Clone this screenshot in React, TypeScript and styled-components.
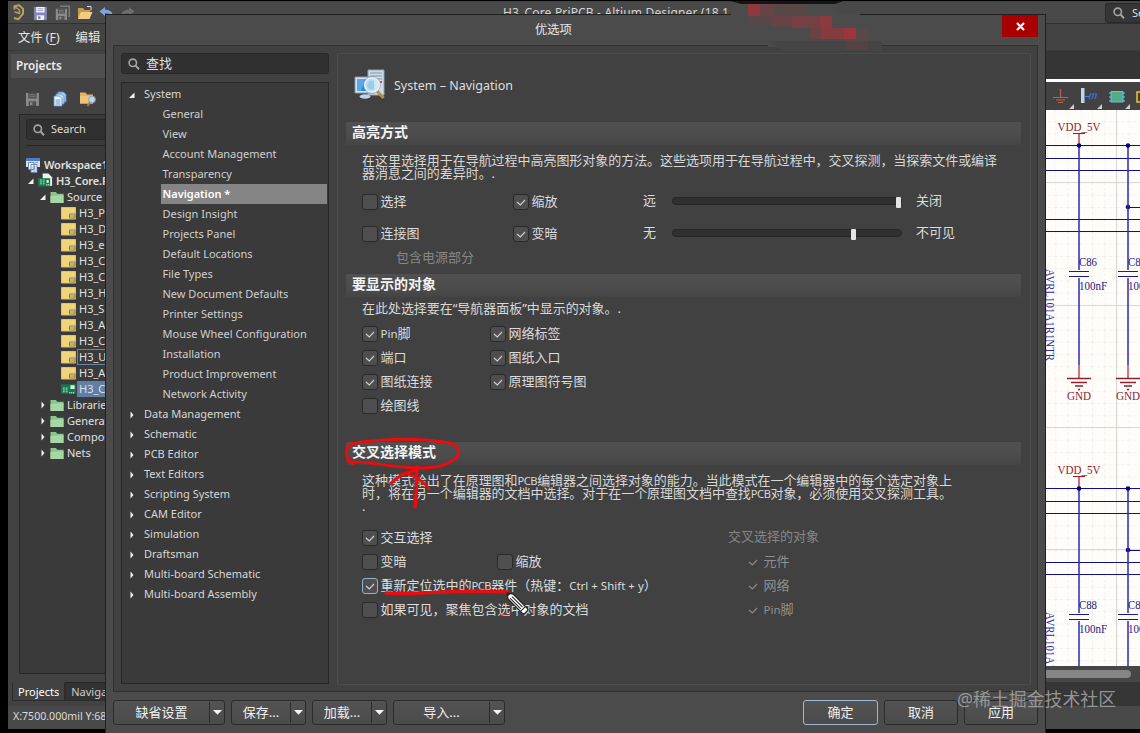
import React from 'react';
import styled, { createGlobalStyle, css } from 'styled-components';

const Global = createGlobalStyle`
  * { box-sizing: border-box; }
  body { margin: 0; background: #000; overflow: hidden; }
  body, button { font-family: "Noto Sans", "Noto Sans CJK SC", sans-serif; }
`;

const Desktop = styled.div`
  position: relative;
  width: 1140px;
  height: 733px;
  overflow: hidden;
  background: #000;
  color: #dcdcdc;
  font-size: 12px;
`;

/* ---------- main application window ---------- */

const AppWindow = styled.div`
  display: flex;
  flex-direction: column;
  width: 1132px;
  height: 728px;
  margin: 1px 0 0 8px;
  padding-top: 1px;
  background: #424242;
`;

const TitleBar = styled.header`
  display: flex;
  align-items: center;
  height: 22px;
  flex: none;
  background: #494949;
  border-bottom: 1px solid #303030;
`;

const QuickIcons = styled.div`
  display: flex;
  align-items: center;
  gap: 6px;
  padding-left: 2px;
  width: 495px;
  flex: none;
  svg { display: block; }
`;

const WindowTitle = styled.div`
  width: 602px;
  font-size: 12px;
  white-space: nowrap;
  line-height: 22px;
  letter-spacing: 0.16px;
  color: #d4d4d4;
`;

const GlobalSearch = styled.div`
  display: flex;
  align-items: center;
  gap: 7px;
  flex: 1;
  height: 20px;
  padding-left: 7px;
  background: #363636;
  border: 1px solid #2a2a2a;
  border-right: 0;
  border-radius: 3px 0 0 3px;
  overflow: hidden;
  font-size: 11px;
  svg { flex: none; }
`;

const MenuBar = styled.nav`
  display: flex;
  align-items: center;
  gap: 16px;
  height: 27px;
  flex: none;
  padding-left: 10px;
  font-size: 12.3px;
  color: #e4e4e4;
  background: #434343;
  border-bottom: 1px solid #3a3a3a;
  u { text-underline-offset: 2px; }
`;

const Workspace = styled.div`
  display: flex;
  justify-content: space-between;
  flex: 1;
  min-height: 0;
`;

const ProjectPanel = styled.aside`
  display: flex;
  flex-direction: column;
  width: 150px;
  padding: 3px 0 0 3px;
`;

const PanelTitle = styled.h2`
  margin: 0;
  height: 24px;
  padding-left: 5px;
  line-height: 22px;
  font-size: 11.7px;
  font-weight: 600;
  background: #4f4f4f;
  color: #ececec;
`;

const PanelTools = styled.div`
  display: flex;
  align-items: center;
  gap: 11px;
  height: 36px;
  padding: 5px 0 0 14px;
  svg { display: block; }
`;

const TreeBox = styled.div`
  height: 560px;
  margin-left: 8px;
  border: 1px solid #262626;
  background: #3a3a3a;
`;

const SearchField = styled.div<{ $large?: boolean }>`
  display: flex;
  align-items: center;
  height: 21px;
  border: 1px solid #282828;
  border-radius: 3px;
  background: #303030;
  color: #dedede;
  ${p => p.$large
    ? css`padding: 0 0 2px 6px; gap: 6px; font-size: 13px; flex: none; line-height: 16px; svg { margin-top: 2px; }`
    : css`margin: 4px 0 0 6px; padding: 0 0 2px 6px; gap: 6px; font-size: 11px; svg { margin-top: 2px; }`}
`;

const Rule = styled.div`
  height: 1px;
  margin: 5px 0 11px 6px;
  background: #262626;
`;

const ProjectRow = styled.div<{ $indent: number; $bold?: boolean }>`
  display: flex;
  align-items: center;
  height: 16px;
  padding-left: ${p => p.$indent}px;
  font-size: 11px;
  white-space: nowrap;
  color: #e0e0e0;
  font-weight: ${p => (p.$bold ? 600 : 400)};
  letter-spacing: ${p => (p.$bold ? '-0.15px' : '0')};
  svg { flex: none; margin-right: 1px; }
  svg + svg { margin-left: 2px; }
`;

const ProjectName = styled.span<{ $mark?: 'outline' | 'fill' }>`
  padding: 0 1px;
  height: 16px;
  line-height: 13px;
  flex: 1;
  border: 1px solid ${p => (p.$mark === 'outline' ? '#6883a5' : 'transparent')};
  background: ${p => (p.$mark === 'fill' ? '#5d7fa8' : 'transparent')};
`;

const BottomTabs = styled.div`
  display: flex;
  height: 19px;
  margin: 8px 0 0 1px;
  font-size: 11px;
`;

const BottomTab = styled.div<{ $active?: boolean }>`
  padding: 0 5px;
  line-height: 17px;
  background: ${p => (p.$active ? '#424242' : '#333')};
  border: 1px solid #2c2c2c;
  border-top-color: ${p => (p.$active ? '#424242' : '#262626')};
  color: ${p => (p.$active ? '#fff' : '#ccc')};
`;

const StatusBar = styled.footer`
  height: 23px;
  flex: none;
  padding-left: 5px;
  line-height: 21px;
  font-size: 10.6px;
  background: #494949;
`;

const DocumentArea = styled.main`
  display: flex;
  flex-direction: column;
  width: 94px;
`;

const DocTabs = styled.div`
  height: 31px;
  flex: none;
  background: #353535;
  border-bottom: 3px solid #fff;
`;

const DocTools = styled.div`
  height: 28px;
  flex: none;
  svg { display: block; }
`;

const Sheet = styled.div`
  height: 556px;
  flex: none;
  background: #fffdfa;
  svg { display: block; }
`;

const ScrollTrack = styled.div`
  height: 16px;
  flex: none;
  padding-top: 4px;
  background: #464646;
`;

const ScrollThumb = styled.div`
  width: 85px;
  height: 8px;
  border-radius: 0 4px 4px 0;
  background: #858585;
`;

const DocFooter = styled.div`
  flex: 1;
  background: #363636;
`;

/* ---------- preferences dialog ---------- */

const Dialog = styled.section`
  position: absolute;
  left: 105px;
  top: 14px;
  width: 941px;
  height: 730px;
  display: flex;
  flex-direction: column;
  background: #4b4b4b;
  border: 1px solid #202020;
  padding: 0 7px;
`;

const DialogTitle = styled.div`
  display: flex;
  justify-content: flex-end;
  height: 30px;
  flex: none;
`;

const TitleText = styled.div`
  flex: 1;
  padding-left: 422px;
  line-height: 29px;
  font-size: 12.3px;
  color: #e6e6e6;
`;

const CloseButton = styled.button`
  display: flex;
  align-items: center;
  justify-content: center;
  width: 36px;
  height: 22px;
  padding: 0;
  border: 0;
  background: #a80000;
`;

const DialogBody = styled.div`
  display: flex;
  gap: 8px;
  height: 647px;
  flex: none;
  padding: 7px 6px 6px 7px;
  border: 1px solid #303030;
  background: #414141;
`;

const Sidebar = styled.div`
  display: flex;
  flex-direction: column;
  gap: 8px;
  width: 208px;
`;

const Categories = styled.div`
  height: 602px;
  padding: 1px;
  border: 1px solid #272727;
  background: #3a3a3a;
`;

const Category = styled.div`
  display: flex;
  align-items: center;
  height: 20px;
  padding: 0 0 2px 5px;
  font-size: 11px;
  color: #d6d6d6;
  svg { margin: 3px 8px 0 0; }
`;

const Page = styled.div<{ $active?: boolean }>`
  height: 20px;
  margin-left: 38px;
  padding-left: 1.500px;
  line-height: 19px;
  font-size: 11px;
  white-space: nowrap;
  color: ${p => (p.$active ? '#fff' : '#cfcfcf')};
  font-weight: ${p => (p.$active ? 600 : 400)};
  background: ${p => (p.$active ? '#858585' : 'transparent')};
`;

const Content = styled.div`
  width: 694px;
  height: 632px;
  padding: 0 9px 0 8px;
  border: 1px solid #4d4d4d;
`;

const PageHeader = styled.div`
  display: flex;
  align-items: center;
  gap: 8px;
  height: 68px;
  padding: 0 0 6px 8px;
  font-size: 12.500px;
  color: #dedede;
`;

const SectionBar = styled.h3`
  height: 23px;
  margin: 0;
  padding-left: 6px;
  line-height: 20px;
  font-size: 14px;
  font-weight: 700;
  color: #f4f4f4;
  background: linear-gradient(#505050, #4b4b4b 70%, #444);
`;

const SectionBody = styled.div<{ $height: number }>`
  height: ${p => p.$height}px;
  padding-left: 16px;
  font-size: 13px;
`;

const Description = styled.p<{ $top: number; $height: number }>`
  margin: 0;
  padding-top: ${p => p.$top}px;
  height: ${p => p.$height}px;
  line-height: 13px;
  white-space: nowrap;
  letter-spacing: -0.04px;
  color: #d8d8d8;
`;

const Abbr = styled.span`
  font-size: 11.2px;
  letter-spacing: -0.5px;
`;

const OptionRow = styled.div<{ $height?: number; $columns: string }>`
  display: grid;
  grid-template-columns: ${p => p.$columns};
  align-items: center;
  height: ${p => p.$height ?? 24}px;
`;

const OptionLabel = styled.label<{ $dim?: boolean }>`
  display: flex;
  align-items: center;
  gap: 2.500px;
  white-space: nowrap;
  line-height: 16px;
  color: ${p => (p.$dim ? '#8f8f8f' : '#dcdcdc')};
  small { font-size: 11.5px; }
`;

const OptionText = styled.span`
  padding-bottom: 2px;
`;

const Box = styled.span<{ $focus?: boolean; $bare?: boolean }>`
  display: flex;
  align-items: center;
  justify-content: center;
  width: 16px;
  height: 16px;
  border: 1px solid ${p => (p.$bare ? 'transparent' : p.$focus ? '#8fb2cf' : '#2a2a2a')};
  border-radius: 3px;
  background: ${p => (p.$bare ? 'transparent' : '#4f4f4f')};
`;

const Caption = styled.span<{ $dim?: boolean; $indent?: number }>`
  display: block;
  margin-left: ${p => p.$indent ?? 0}px;
  padding-bottom: 3px;
  line-height: 15px;
  color: ${p => (p.$dim ? '#868686' : '#dcdcdc')};
`;

const Track = styled.span`
  display: block;
  width: 230px;
  height: 8px;
  margin-bottom: 2px;
  border: 1px solid #272727;
  border-radius: 4px;
  background: #303030;
`;

const Thumb = styled.span<{ $at: number }>`
  display: block;
  width: 5px;
  height: 11px;
  margin: -1px 0 0 ${p => p.$at}px;
  border-radius: 1px;
  background: #e4e4e4;
`;

const DialogButtons = styled.div`
  display: flex;
  gap: 6px;
  padding-top: 8px;
`;

const Spacer = styled.div`
  flex: 1;
`;

const Button = styled.button<{ $width: number; $primary?: boolean }>`
  display: flex;
  align-items: center;
  width: ${p => p.$width}px;
  height: 25px;
  padding: 0;
  border: 1px solid ${p => (p.$primary ? '#9db9d8' : '#2b2b2b')};
  border-radius: 3px;
  background: linear-gradient(#535353, #4b4b4b);
  color: #efefef;
  font-size: 13px;
`;

const ButtonText = styled.span`
  flex: 1;
  text-align: center;
  line-height: 18px;
  padding-bottom: 2px;
`;

const DropPart = styled.span`
  display: flex;
  align-items: center;
  justify-content: center;
  width: 15px;
  height: 21px;
  border-left: 1px solid #2b2b2b;
`;

const Overlay = styled.svg`
  position: absolute;
  left: 0;
  top: 0;
  pointer-events: none;
`;

/* ---------- icons ---------- */

const SearchIcon = ({ size = 12 }: { size?: number }) => (
  <svg width={size} height={size} viewBox="0 0 12 12" fill="none" stroke="#a5a5a5">
    <circle cx="4.8" cy="4.8" r="3.7" strokeWidth="1.6" />
    <path d="M7.6 7.6 11 11.2" strokeWidth="2" />
  </svg>
);

const LogoIcon = () => (
  <svg width="17" height="17" viewBox="0 0 17 17" fill="none" stroke="#b6a25c" strokeWidth="2" strokeLinejoin="round">
    <path d="M4.500 5.500V2.200L9 1.300l4 3.400v5L8.500 15.200 4 14" />
    <path d="M4.500 2.500 9.500 6v3.500L4.500 7.800" strokeWidth="1.500" />
  </svg>
);

const DiskIcon = ({ body, slot, stack }: { body: string; slot: string; stack?: boolean }) => (
  <svg width="16" height="16" viewBox="0 0 16 16">
    {stack && <path d="M5 .5h10v11.500h-1.500V2H5z" fill={body} opacity=".8" />}
    <g transform={stack ? 'translate(0 3) scale(.8)' : 'translate(0 1) scale(.93)'}>
      <path d="M1 1h14v14H1z" fill={body} />
      <path d="M3.500 1h9v6h-9z" fill={slot} />
      <path d="M5 3h6M5 5h6" stroke={body} strokeWidth=".8" />
      <path d="M4 10h8v5H4z" fill={slot} />
      <path d="M5.500 11h2.500v3H5.500z" fill={body} />
    </g>
  </svg>
);

const OpenFolder = () => (
  <svg width="16" height="16" viewBox="0 0 16 16">
    <path d="M1 14V3h5l1.500 2H13v3" fill="#c99c4a" />
    <path d="M10 1.500h4v4" fill="none" stroke="#ddd" />
    <path d="M1 14 4 7h11.500l-3 7z" fill="#f0cd84" />
  </svg>
);

const CurveArrow = ({ color, flip }: { color: string; flip?: boolean }) => (
  <svg width="15" height="14" viewBox="0 0 15 14">
    <g transform={flip ? 'translate(15 0) scale(-1 1)' : undefined}>
      <path d="M.5 5.500 6 1v2.800c5 0 7.500 2 8 6.700C12 8 10 7.300 6 7.300V10z" fill={color} />
    </g>
  </svg>
);

const PagesIcon = () => (
  <svg width="16" height="16" viewBox="0 0 16 16" stroke="#5a8cc4" strokeWidth=".9">
    <path d="M6 1h5.500L14 3.500V11H6z" fill="#a8cdf0" />
    <path d="M4 3h5.500L12 5.500V13H4z" fill="#c9e1f7" />
    <path d="M2 5h5.500L10 7.500V15H2z" fill="#eef6fd" />
    <path d="M3.500 9h5M3.500 11h5M3.500 13h5" />
  </svg>
);

const FolderSearch = () => (
  <svg width="18" height="16" viewBox="0 0 18 16">
    <path d="M1 1.500h5.500L8 3.500h6v9H1z" fill="#e3b35d" />
    <path d="M1 5h13v7.500H1z" fill="#edc47a" />
    <path d="m11.500 10.500-3 4.500" stroke="#b87a2e" strokeWidth="2" />
    <circle cx="13" cy="8.500" r="3.400" fill="#b9d6ea" stroke="#8796a4" strokeWidth=".9" />
  </svg>
);

const WorkspaceIcon = () => (
  <svg width="16" height="16" viewBox="0 0 16 16">
    <path d="M1 1h14v3H1z" fill="#4f7cc4" />
    <path d="M1 4h14v6H1z" fill="#d5e2f2" />
    <path d="M3.500 5.500H9v7H3.500zM6 7.500h6v8H6z" fill="#f6f9fd" stroke="#5d7fae" strokeWidth=".9" />
    <path d="M7.500 10h3M7.500 12h3M7.500 14h3M10 6l3-1" stroke="#5d7fae" strokeWidth=".8" />
  </svg>
);

const BoardIcon = ({ sheet }: { sheet?: boolean }) => (
  <svg width="15" height="16" viewBox="0 0 16 16">
    {sheet && <path d="M5 0h6l4 4v9H5z" fill="#eef3f0" />}
    <path d={sheet ? 'M0 5h13v9H0z' : 'M0 3h16v10H0z'} fill="#14794f" />
    <path d="M2 7h2M2 9h2M2 11h2M5 7h2M5 9h2M5 11h2" stroke="#b8e4cc" strokeWidth="1" />
    <path d={sheet ? 'M9 7h2.500v3H9z' : 'M10 4h4.500v4H10z'} fill="#d9f1e4" />
    <path d="M9 12h5" stroke="#d9f1e4" strokeDasharray="1 1" strokeWidth="1.600" />
  </svg>
);

const GreenFolder = () => (
  <svg width="14" height="13" viewBox="0 0 14 13">
    <path d="M.5 1h5.500l1.200 1.800h6.300V12H.5z" fill="#8cc48a" />
    <path d="M.5 5 13.500 4v8H.5z" fill="#a6d8a2" />
  </svg>
);

const SchDocIcon = () => (
  <svg width="15" height="13" viewBox="0 0 15 13">
    <path d="M.5.500h14v11.500H.5z" fill="#efd47b" stroke="#e6c05c" />
    <path d="M8.500 7h5.500v4H8.500zM8.500 9H14" fill="#f3df9b" stroke="#86703a" strokeWidth=".9" />
  </svg>
);

const Caret = ({ open }: { open?: boolean }) => (
  <svg width="8" height="8" viewBox="0 0 8 8" fill="#f2f2f2">
    {open ? <path d="M6.500 1.500v5.500H1z" /> : <path d="M2.500.500v7l3-3.500z" />}
  </svg>
);

const DropCaret = () => (
  <svg width="9" height="5" viewBox="0 0 9 5"><path d="M0 0h9L4.500 4.800z" fill="#f4f4f4" /></svg>
);

const Check = ({ dim }: { dim?: boolean }) => (
  <svg width="10" height="9" viewBox="0 0 10 9" fill="none" stroke={dim ? '#8c8c8c' : '#cfcfcf'} strokeWidth="1.150">
    <path d="m1 4 3.300 3L9 2" />
  </svg>
);

const ComputerIcon = () => (
  <svg width="32" height="32" viewBox="0 0 32 32">
    <path d="M14 1h16v25H14z" fill="#cfdbe4" stroke="#8ea6b8" />
    <path d="M16 4h12M16 7h12M16 10h12" stroke="#7e97aa" />
    <path d="M26 13h2" stroke="#d05545" strokeWidth="2" />
    <path d="M1 8h19v16H1z" fill="#d7e4ed" stroke="#7e9bb1" />
    <path d="M3 10h15v12H3z" fill="#2b86d4" />
    <path d="M3 10h8L7 22H3z" fill="#56a8e8" />
    <ellipse cx="11" cy="27.500" rx="5.500" ry="2.200" fill="#c6d4de" />
    <path d="m23 22 6.500 7" stroke="#b98d4d" strokeWidth="3" />
    <circle cx="18" cy="16" r="7.500" fill="#cfeafa" fillOpacity=".88" stroke="#eef4f8" strokeWidth="1.600" />
    <circle cx="18" cy="16" r="8.400" fill="none" stroke="#8398a8" strokeWidth=".6" />
    <path d="M13 16c1-4 4-5 7-4.500v9c-4 1-6-1-7-4.500z" fill="#8fc7ee" opacity=".8" />
  </svg>
);

/* ---------- schematic drawing ---------- */

const Capacitor = ({ x, name }: { x: number; name: string }) => (
  <g>
    <path d={`M${x} 145V270M${x} 278V365`} stroke="#2f2bb0" strokeWidth="1.500" />
    <path d={`M${x - 10} 271.500h20M${x - 10} 276.500h20`} stroke="#1a1a90" strokeWidth="1.200" />
    <path d={`M${x} 365V378`} stroke="#c02a35" strokeWidth="1.300" />
    <path d={`M${x - 12} 378.500h24M${x - 8} 382.500h16M${x - 4} 386h8M${x - 1} 389.500h2`} stroke="#8a2030" strokeWidth="1.300" />
    <circle cx={x} cy="145.500" r="2.300" fill="#000080" />
    <g fill="#1b1a80">
      <text x={x} y="265.500" textLength={18} lengthAdjust="spacingAndGlyphs">{name}</text>
      <text x={x} y="290" textLength="28" lengthAdjust="spacingAndGlyphs">100nF</text>
    </g>
    <text x={x} y="400" textAnchor="middle" textLength="24" lengthAdjust="spacingAndGlyphs" fill="#8a1c2c">GND</text>
  </g>
);

const Circuit = ({ dy, cap, part }: { dy: number; cap: string; part: string }) => (
  <g transform={`translate(0 ${dy})`}>
    <path d="M1046 145.500h94M1046 158.500h94M1046 170.500h94M1046 219.500h94M1046 231.500h94M1128 207.500h12" stroke="#101080" strokeWidth="1.200" />
    <path d="M1073 133.500h12M1079 133v12" stroke="#a01825" strokeWidth="1.200" />
    <circle cx="1128" cy="207" r="2.300" fill="#000080" />
    <text x="1057.500" y="131" textLength="43" lengthAdjust="spacingAndGlyphs" fill="#8a1c2c">VDD_5V</text>
    <Capacitor x={1079} name={cap} />
    <Capacitor x={1128} name="C87" />
    <text transform="translate(1045.500 269) rotate(90)" textLength="92" lengthAdjust="spacingAndGlyphs" fill="#2a2a96">{part}</text>
  </g>
);

const Schematic = () => (
  <svg width="94" height="556" viewBox="1046 110 94 556" fill="none" fontFamily="Liberation Serif, serif" fontSize="12">
    <defs>
      <pattern id="grid" x="1043" y="109" width="12.250" height="12.250" patternUnits="userSpaceOnUse">
        <path d="M0 .5h12.250M.5 0v12.250" stroke="#f5f0ec" strokeDasharray="3 2" />
      </pattern>
    </defs>
    <path d="M1046 110h94v556h-94z" fill="url(#grid)" />
    <path d="M1116.500 110v556M1046 182.500h94M1046 305.500h94M1046 427.500h94M1046 549.500h94" stroke="#ddd7d3" />
    <Circuit dy={0} cap="C86" part="AVRL101A1R1NTR" />
    <Circuit dy={343} cap="C88" part="AVRL101A1R1NTR" />
  </svg>
);

const SchematicTools = () => (
  <svg width="94" height="28" viewBox="1046 82 94 28">
    <path d="M1060.500 89v8M1053 97.500h15M1056 100h9M1058 102.500h5" stroke="#c25e55" fill="none" strokeWidth="1.200" />
    <path d="M1081 88h3.500v15h-3.500z" fill="#b9d7f2" />
    <path d="M1085 96.500h4" stroke="#4a7fd0" />
    <path d="m1089 99 1.500-5M1092 99l1.500-5M1095 99l1.500-5M1090 94h7" stroke="#3f6fd0" strokeWidth="1.200" fill="none" />
    <path d="M1109 93h16M1109 97h16M1109 101h16" stroke="#5a9be0" strokeWidth="1.500" />
    <path d="M1111 91.500h12v10.500h-12z" fill="#4fae84" stroke="#74b9ec" />
    <path d="M1137 92h5v10h-5z" fill="#4a4020" stroke="#e7c44a" strokeWidth="1.500" />
    <path d="M1074 104v5h-5zM1102 104v5h-5zM1130 104v5h-5z" fill="#cfcfcf" />
  </svg>
);

/* ---------- composed parts ---------- */

type OptionProps = { label: React.ReactNode; checked?: boolean; focus?: boolean; dim?: boolean };

const Option = ({ label, checked, focus, dim }: OptionProps) => (
  <OptionLabel $dim={dim}>
    <Box $focus={focus} $bare={dim}>{checked && <Check dim={dim} />}</Box>
    <OptionText>{label}</OptionText>
  </OptionLabel>
);

const Slider = ({ at }: { at: number }) => <Track><Thumb $at={at} /></Track>;

const SplitButton = ({ width, children }: { width: number; children: React.ReactNode }) => (
  <Button $width={width}>
    <ButtonText>{children}</ButtonText>
    <DropPart><DropCaret /></DropPart>
  </Button>
);

const systemPages = [
  'General', 'View', 'Account Management', 'Transparency', 'Navigation *', 'Design Insight',
  'Projects Panel', 'Default Locations', 'File Types', 'New Document Defaults', 'Printer Settings',
  'Mouse Wheel Configuration', 'Installation', 'Product Improvement', 'Network Activity',
];

const categories = [
  'Data Management', 'Schematic', 'PCB Editor', 'Text Editors', 'Scripting System', 'CAM Editor',
  'Simulation', 'Draftsman', 'Multi-board Schematic', 'Multi-board Assembly',
];

const sources = ['H3_P', 'H3_D', 'H3_e', 'H3_C', 'H3_C', 'H3_H', 'H3_S', 'H3_A', 'H3_C', 'H3_U', 'H3_A'];
const folders = ['Libraries', 'Generated', 'Components', 'Nets'];

const highlightColumns = '151px 130px 29px 244px 1fr';
const objectColumns = '128px 1fr';
const crossColumns = '135px 248px 1fr';

const Annotations = () => (
  <Overlay width="1140" height="733" viewBox="0 0 1140 733">
    <path d="M731 1h112l-8 3H741z" fill="#151515" />
    <path d="M731 4h105v10h24v33H768v-6h-30V18h-7z" fill="#4b4b4b" />
    <path d="M768 41h114v10H784z" fill="#454545" />
    <g fill="#a0353b">
      <path d="M748 4h12v12h-12z" opacity=".8" />
      <path d="M760 4h14v12h-14z" opacity=".35" />
      <path d="M774 4h34v12h-34z" opacity=".16" />
      <path d="M750 16h22v9h-22z" opacity=".15" />
      <path d="M772 16h20v10h-20z" opacity=".35" />
      <path d="M792 16h28v12h-28z" opacity=".5" />
      <path d="M820 16h12v12h-12z" opacity=".75" />
      <path d="M810 28h11v11h-11z" opacity=".35" />
      <path d="M821 28h23v11h-23z" opacity=".7" />
      <path d="M844 28h12v11h-12z" opacity=".95" />
      <path d="M856 29h12v11h-12zM846 41h22v9h-22z" opacity=".2" />
    </g>
    <g fill="none" stroke="#ea0c0e" strokeWidth="3.500" strokeLinecap="round" strokeLinejoin="round">
      <path d="M353 464c-7-3-8-13-4-19 10-4 50-7 76-5 14 1 24 2 30 5 7 6 3 13-5 17-9 6-28 7-46 5-17-1-40-6-55-5" strokeWidth="2.900" />
      <path d="M417 467c-1 14 0 28-2 40" />
      <path d="M390 484c6-6 13-11 24-13l-12 3M408 474c9 3 16 8 21 15" strokeWidth="2.800" />
      <path d="M386 593c20 1 42 0 60-1 20-1 42-1 62 0" />
      <path d="M500 614q6 2 12 0" strokeWidth="1" opacity=".6" />
    </g>
    <g transform="translate(507 593) rotate(45)">
      <path d="M0 0 5-3.500H25a2 2 0 0 1 2 2v3a2 2 0 0 1-2 2H5z" fill="#fff" stroke="#222" strokeWidth="1.200" />
      <path d="M6-1h15M6 1.500h15M22.500-3v6" stroke="#222" strokeWidth="1" />
      <path d="m0 0 3-2v4z" fill="#222" />
    </g>
    <text x="957" y="706" fontSize="18" textLength="159" lengthAdjust="spacingAndGlyphs" fill="#a6a6a6" fillOpacity=".85" fontFamily="Noto Sans, Noto Sans CJK SC, sans-serif">@稀土掘金技术社区</text>
  </Overlay>
);

export default function App() {
  return (
    <Desktop>
      <Global />
      <AppWindow>
        <TitleBar>
          <QuickIcons>
            <LogoIcon />
            <DiskIcon body="#8583b5" slot="#f2f2fa" />
            <DiskIcon body="#8b8b8b" slot="#555" stack />
            <OpenFolder />
            <CurveArrow color="#7aa6dc" />
            <CurveArrow color="#6d6d6d" flip />
          </QuickIcons>
          <WindowTitle>H3_Core.PrjPCB - Altium Designer (18.1</WindowTitle>
          <GlobalSearch><SearchIcon />Search</GlobalSearch>
        </TitleBar>
        <MenuBar><span>文件 (<u>F</u>)</span><span>编辑</span></MenuBar>
        <Workspace>
          <ProjectPanel>
            <PanelTitle>Projects</PanelTitle>
            <PanelTools>
              <DiskIcon body="#8b8b8b" slot="#505050" />
              <PagesIcon />
              <FolderSearch />
            </PanelTools>
            <TreeBox>
              <SearchField><SearchIcon />Search</SearchField>
              <Rule />
              <ProjectRow $indent={5} $bold><WorkspaceIcon /><ProjectName>Workspace1</ProjectName></ProjectRow>
              <ProjectRow $indent={7} $bold><Caret open /><BoardIcon sheet /><ProjectName>H3_Core.PrjPCB</ProjectName></ProjectRow>
              <ProjectRow $indent={19}><Caret open /><GreenFolder /><ProjectName>Source</ProjectName></ProjectRow>
              {sources.map((name, i) => (
                <ProjectRow key={i} $indent={41}>
                  <SchDocIcon />
                  <ProjectName $mark={name === 'H3_U' ? 'outline' : undefined}>{name}</ProjectName>
                </ProjectRow>
              ))}
              <ProjectRow $indent={41}><BoardIcon /><ProjectName $mark="fill">H3_C</ProjectName></ProjectRow>
              {folders.map(name => (
                <ProjectRow key={name} $indent={19}><Caret /><GreenFolder /><ProjectName>{name}</ProjectName></ProjectRow>
              ))}
            </TreeBox>
            <BottomTabs>
              <BottomTab $active>Projects</BottomTab>
              <BottomTab>Navigator</BottomTab>
            </BottomTabs>
          </ProjectPanel>
          <DocumentArea>
            <DocTabs />
            <DocTools><SchematicTools /></DocTools>
            <Sheet><Schematic /></Sheet>
            <ScrollTrack><ScrollThumb /></ScrollTrack>
            <DocFooter />
          </DocumentArea>
        </Workspace>
        <StatusBar>X:7500.000mil Y:6800.000mil</StatusBar>
      </AppWindow>

      <Dialog>
        <DialogTitle>
          <TitleText>优选项</TitleText>
          <CloseButton aria-label="Close">
            <svg width="9" height="9" viewBox="0 0 9 9"><path d="m1 1 7 7M8 1 1 8" stroke="#fff" strokeWidth="2.200" /></svg>
          </CloseButton>
        </DialogTitle>
        <DialogBody>
          <Sidebar>
            <SearchField $large><SearchIcon />查找</SearchField>
            <Categories>
              <Category><Caret open />System</Category>
              {systemPages.map(name => (
                <Page key={name} $active={name === 'Navigation *'}>{name}</Page>
              ))}
              {categories.map(name => (
                <Category key={name}><Caret />{name}</Category>
              ))}
            </Categories>
          </Sidebar>
          <Content>
            <PageHeader><ComputerIcon />System – Navigation</PageHeader>

            <SectionBar>高亮方式</SectionBar>
            <SectionBody $height={129}>
              <Description $top={9} $height={41}>
                在这里选择用于在导航过程中高亮图形对象的方法。这些选项用于在导航过程中，交叉探测，当探索文件或编译<br />
                器消息之间的差异时。.
              </Description>
              <OptionRow $height={32} $columns={highlightColumns}>
                <Option label="选择" />
                <Option label="缩放" checked />
                <Caption>远</Caption>
                <Slider at={223} />
                <Caption>关闭</Caption>
              </OptionRow>
              <OptionRow $height={32} $columns={highlightColumns}>
                <Option label="连接图" />
                <Option label="变暗" checked />
                <Caption>无</Caption>
                <Slider at={178} />
                <Caption>不可见</Caption>
              </OptionRow>
              <Caption $dim $indent={34}>包含电源部分</Caption>
            </SectionBody>

            <SectionBar>要显示的对象</SectionBar>
            <SectionBody $height={145}>
              <Description $top={5} $height={25}>在此处选择要在“导航器面板”中显示的对象。.</Description>
              <OptionRow $columns={objectColumns}>
                <Option label={<><small>Pin</small>脚</>} checked />
                <Option label="网络标签" checked />
              </OptionRow>
              <OptionRow $columns={objectColumns}>
                <Option label="端口" checked />
                <Option label="图纸入口" checked />
              </OptionRow>
              <OptionRow $columns={objectColumns}>
                <Option label="图纸连接" checked />
                <Option label="原理图符号图" checked />
              </OptionRow>
              <OptionRow $columns={objectColumns}>
                <Option label="绘图线" />
              </OptionRow>
            </SectionBody>

            <SectionBar>交叉选择模式</SectionBar>
            <SectionBody $height={200}>
              <Description $top={9} $height={61}>
                这种模式给出了在原理图和<Abbr>PCB</Abbr>编辑器之间选择对象的能力。当此模式在一个编辑器中的每个选定对象上<br />
                时，将在另一个编辑器的文档中选择。对于在一个原理图文档中查找<Abbr>PCB</Abbr>对象，必须使用交叉探测工具。<br />
                .
              </Description>
              <OptionRow $columns="366px 1fr">
                <Option label="交互选择" checked />
                <Caption $dim>交叉选择的对象</Caption>
              </OptionRow>
              <OptionRow $columns={crossColumns}>
                <Option label="变暗" />
                <Option label="缩放" />
                <Option label="元件" checked dim />
              </OptionRow>
              <OptionRow $columns="383px 1fr">
                <Option label={<>重新定位选中的<Abbr>PCB</Abbr>器件（热键：<small>Ctrl + Shift + y</small>）</>} checked focus />
                <Option label="网络" checked dim />
              </OptionRow>
              <OptionRow $columns="383px 1fr">
                <Option label="如果可见，聚焦包含选中对象的文档" />
                <Option label={<><small>Pin</small>脚</>} checked dim />
              </OptionRow>
            </SectionBody>
          </Content>
        </DialogBody>
        <DialogButtons>
          <SplitButton width={112}>缺省设置</SplitButton>
          <SplitButton width={75}>保存...</SplitButton>
          <SplitButton width={75}>加载...</SplitButton>
          <SplitButton width={112}>导入...</SplitButton>
          <Spacer />
          <Button $width={75} $primary><ButtonText>确定</ButtonText></Button>
          <Button $width={74}><ButtonText>取消</ButtonText></Button>
          <Button $width={74}><ButtonText>应用</ButtonText></Button>
        </DialogButtons>
      </Dialog>
      <Annotations />
    </Desktop>
  );
}
